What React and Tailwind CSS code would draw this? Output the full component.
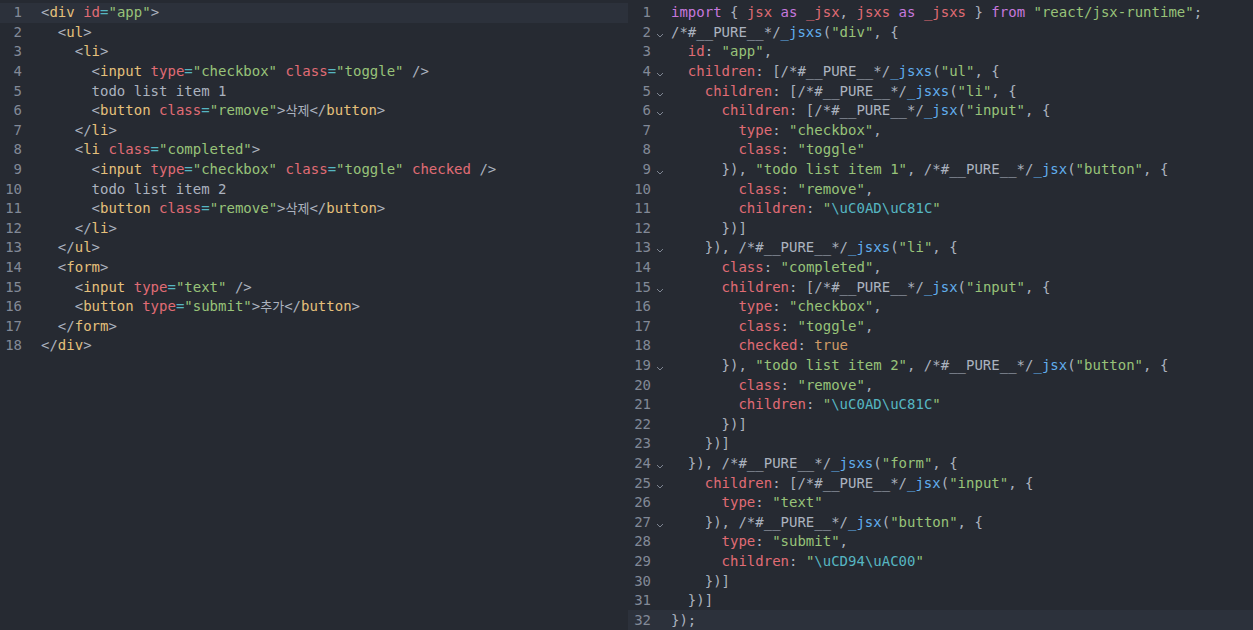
import React from "react";

const tone = {
  p: "text-[#abb2bf]",
  t: "text-[#e5c07b]",
  a: "text-[#e06c75]",
  s: "text-[#98c379]",
  e: "text-[#56b6c2]",
  k: "text-[#c678dd]",
  f: "text-[#61afef]",
  o: "text-[#d19a66]",
};

// token = [kind, text]
const sp = (n) => ["p", " ".repeat(n)];

const htmlLines = [
  [["p", "<"], ["t", "div"], ["p", " "], ["a", "id"], ["e", "="], ["s", '"app"'], ["p", ">"]],
  [sp(2), ["p", "<"], ["t", "ul"], ["p", ">"]],
  [sp(4), ["p", "<"], ["t", "li"], ["p", ">"]],
  [sp(6), ["p", "<"], ["t", "input"], ["p", " "], ["a", "type"], ["e", "="], ["s", '"checkbox"'], ["p", " "], ["a", "class"], ["e", "="], ["s", '"toggle"'], ["p", " />"]],
  [sp(6), ["p", "todo list item 1"]],
  [sp(6), ["p", "<"], ["t", "button"], ["p", " "], ["a", "class"], ["e", "="], ["s", '"remove"'], ["p", ">"], ["ko", "삭제"], ["p", "</"], ["t", "button"], ["p", ">"]],
  [sp(4), ["p", "</"], ["t", "li"], ["p", ">"]],
  [sp(4), ["p", "<"], ["t", "li"], ["p", " "], ["a", "class"], ["e", "="], ["s", '"completed"'], ["p", ">"]],
  [sp(6), ["p", "<"], ["t", "input"], ["p", " "], ["a", "type"], ["e", "="], ["s", '"checkbox"'], ["p", " "], ["a", "class"], ["e", "="], ["s", '"toggle"'], ["p", " "], ["a", "checked"], ["p", " />"]],
  [sp(6), ["p", "todo list item 2"]],
  [sp(6), ["p", "<"], ["t", "button"], ["p", " "], ["a", "class"], ["e", "="], ["s", '"remove"'], ["p", ">"], ["ko", "삭제"], ["p", "</"], ["t", "button"], ["p", ">"]],
  [sp(4), ["p", "</"], ["t", "li"], ["p", ">"]],
  [sp(2), ["p", "</"], ["t", "ul"], ["p", ">"]],
  [sp(2), ["p", "<"], ["t", "form"], ["p", ">"]],
  [sp(4), ["p", "<"], ["t", "input"], ["p", " "], ["a", "type"], ["e", "="], ["s", '"text"'], ["p", " />"]],
  [sp(4), ["p", "<"], ["t", "button"], ["p", " "], ["a", "type"], ["e", "="], ["s", '"submit"'], ["p", ">"], ["ko", "추가"], ["p", "</"], ["t", "button"], ["p", ">"]],
  [sp(2), ["p", "</"], ["t", "form"], ["p", ">"]],
  [["p", "</"], ["t", "div"], ["p", ">"]],
];

const PURE = "/*#__PURE__*/";

const jsLines = [
  [["k", "import"], ["p", " { "], ["a", "jsx"], ["k", " as "], ["a", "_jsx"], ["p", ", "], ["a", "jsxs"], ["k", " as "], ["a", "_jsxs"], ["p", " } "], ["k", "from"], ["p", " "], ["s", '"react/jsx-runtime"'], ["p", ";"]],
  [["p", PURE], ["f", "_jsxs"], ["p", "("], ["s", '"div"'], ["p", ", {"]],
  [sp(2), ["a", "id"], ["p", ": "], ["s", '"app"'], ["p", ","]],
  [sp(2), ["a", "children"], ["p", ": [" + PURE], ["f", "_jsxs"], ["p", "("], ["s", '"ul"'], ["p", ", {"]],
  [sp(4), ["a", "children"], ["p", ": [" + PURE], ["f", "_jsxs"], ["p", "("], ["s", '"li"'], ["p", ", {"]],
  [sp(6), ["a", "children"], ["p", ": [" + PURE], ["f", "_jsx"], ["p", "("], ["s", '"input"'], ["p", ", {"]],
  [sp(8), ["a", "type"], ["p", ": "], ["s", '"checkbox"'], ["p", ","]],
  [sp(8), ["a", "class"], ["p", ": "], ["s", '"toggle"']],
  [sp(6), ["p", "}), "], ["s", '"todo list item 1"'], ["p", ", " + PURE], ["f", "_jsx"], ["p", "("], ["s", '"button"'], ["p", ", {"]],
  [sp(8), ["a", "class"], ["p", ": "], ["s", '"remove"'], ["p", ","]],
  [sp(8), ["a", "children"], ["p", ": "], ["s", '"'], ["e", "\\uC0AD\\uC81C"], ["s", '"']],
  [sp(6), ["p", "})]"]],
  [sp(4), ["p", "}), " + PURE], ["f", "_jsxs"], ["p", "("], ["s", '"li"'], ["p", ", {"]],
  [sp(6), ["a", "class"], ["p", ": "], ["s", '"completed"'], ["p", ","]],
  [sp(6), ["a", "children"], ["p", ": [" + PURE], ["f", "_jsx"], ["p", "("], ["s", '"input"'], ["p", ", {"]],
  [sp(8), ["a", "type"], ["p", ": "], ["s", '"checkbox"'], ["p", ","]],
  [sp(8), ["a", "class"], ["p", ": "], ["s", '"toggle"'], ["p", ","]],
  [sp(8), ["a", "checked"], ["p", ": "], ["o", "true"]],
  [sp(6), ["p", "}), "], ["s", '"todo list item 2"'], ["p", ", " + PURE], ["f", "_jsx"], ["p", "("], ["s", '"button"'], ["p", ", {"]],
  [sp(8), ["a", "class"], ["p", ": "], ["s", '"remove"'], ["p", ","]],
  [sp(8), ["a", "children"], ["p", ": "], ["s", '"'], ["e", "\\uC0AD\\uC81C"], ["s", '"']],
  [sp(6), ["p", "})]"]],
  [sp(4), ["p", "})]"]],
  [sp(2), ["p", "}), " + PURE], ["f", "_jsxs"], ["p", "("], ["s", '"form"'], ["p", ", {"]],
  [sp(4), ["a", "children"], ["p", ": [" + PURE], ["f", "_jsx"], ["p", "("], ["s", '"input"'], ["p", ", {"]],
  [sp(6), ["a", "type"], ["p", ": "], ["s", '"text"']],
  [sp(4), ["p", "}), " + PURE], ["f", "_jsx"], ["p", "("], ["s", '"button"'], ["p", ", {"]],
  [sp(6), ["a", "type"], ["p", ": "], ["s", '"submit"'], ["p", ","]],
  [sp(6), ["a", "children"], ["p", ": "], ["s", '"'], ["e", "\\uCD94\\uAC00"], ["s", '"']],
  [sp(4), ["p", "})]"]],
  [sp(2), ["p", "})]"]],
  [["p", "});"]],
];

const folds = new Set([2, 4, 5, 6, 9, 13, 15, 19, 24, 25, 27]);

const Tokens = ({ line }) =>
  line.map(([kind, text], i) =>
    kind === "ko" ? (
      <span key={i} className="text-[#abb2bf] text-[13px]">{text}</span>
    ) : (
      <span key={i} className={tone[kind]}>{text}</span>
    )
  );

const Chevron = () => (
  <svg width="8" height="5" viewBox="0 0 8 5" className="mt-[6px]">
    <path d="M1 1l3 3 3-3" fill="none" stroke="#7e8592" strokeWidth="1" />
  </svg>
);

const Pane = ({ lines, active, foldable, className }) => (
  <div className={`flex flex-col pt-[3px] ${className}`}>
    {lines.map((line, idx) => {
      const n = idx + 1;
      return (
        <div
          key={n}
          className={`flex h-[19.6px] items-center whitespace-pre ${n === active ? "bg-[#2c313b]" : ""}`}
        >
          <span className={`${foldable ? "w-[23px]" : "w-[22px]"} text-right text-[#828997] shrink-0`}>{n}</span>
          {foldable ? (
            <span className="w-[20px] shrink-0 flex pl-[5px]">{folds.has(n) && <Chevron />}</span>
          ) : (
            <span className="w-[19px] shrink-0" />
          )}
          <span><Tokens line={line} /></span>
        </div>
      );
    })}
  </div>
);

export default function App() {
  return (
    <div className="w-[1253px] h-[630px] flex bg-[#262a32] text-[14px] font-['DejaVu_Sans_Mono','Noto_Sans_CJK_KR',monospace] overflow-hidden">
      <Pane lines={htmlLines} active={1} className="w-[628px] shrink-0" />
      <Pane lines={jsLines} active={32} foldable className="flex-1" />
    </div>
  );
}
